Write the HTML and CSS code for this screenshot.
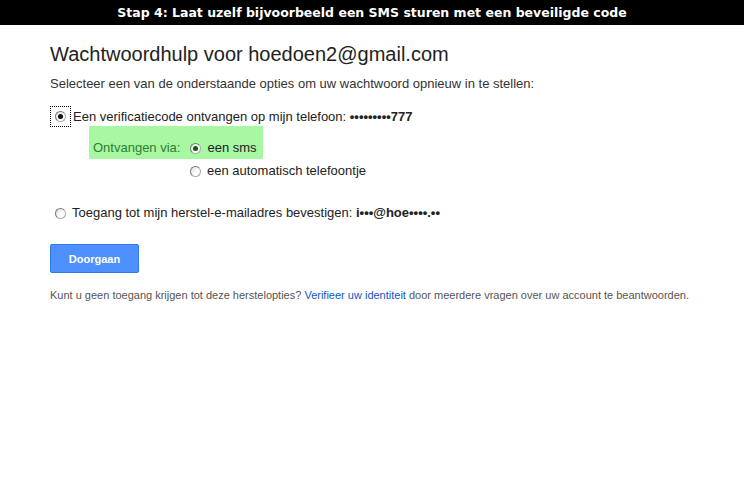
FILE: index.html
```html
<!DOCTYPE html>
<html>
<head>
<meta charset="utf-8">
<link rel="stylesheet" href="styles.css">
</head>
<body>
<div class="banner">Stap 4: Laat uzelf bijvoorbeeld een SMS sturen met een beveiligde code</div>
<div class="main">
  <h1 class="title">Wachtwoordhulp voor hoedoen2@gmail.com</h1>
  <p class="intro">Selecteer een van de onderstaande opties om uw wachtwoord opnieuw in te stellen:</p>
  <div class="option first">
    <span class="focus"><span class="radio checked"></span></span>
    <span class="label">Een verificatiecode ontvangen op mijn telefoon: <b>•••••••••777</b></span>
  </div>
  <div class="sub">
    <div class="via">
      <span class="via-label">Ontvangen via:</span>
      <span class="radio checked green"></span>
      <span class="label">een sms</span>
    </div>
    <div class="call">
      <span class="radio"></span>
      <span class="label">een automatisch telefoontje</span>
    </div>
  </div>
  <div class="option third">
    <span class="radio"></span>
    <span class="label">Toegang tot mijn herstel-e-mailadres bevestigen: <b>i•••@hoe••••.••</b></span>
  </div>
  <button class="btn">Doorgaan</button>
  <p class="foot">Kunt u geen toegang krijgen tot deze herstelopties? <a href="#">Verifieer uw identiteit</a> door meerdere vragen over uw account te beantwoorden.</p>
</div>
</body>
</html>
```
FILE: styles.css
```css
html, body { margin: 0; padding: 0; background: #fff; }
body { font-family: "Liberation Sans", Arial, sans-serif; color: #222; }
.banner {
  height: 25px; background: #000; color: #fff;
  font-family: "DejaVu Sans", Verdana, sans-serif; font-weight: bold; font-size: 12.5px;
  display: flex; align-items: center; justify-content: center;
}
.main { padding-left: 50px; }
.title { font-weight: normal; font-size: 20px; margin: 0; padding-top: 17px; line-height: 24px; color: #222; }
.intro { font-size: 13px; margin: 0; padding-top: 10px; line-height: 16px; color: #333; }
.option { display: flex; align-items: center; font-size: 13px; color: #222; }
.first { margin-top: 14px; height: 21px; }
.focus { width: 19px; height: 19px; border: 1px dotted #000; display: flex; align-items: center; justify-content: center; margin-right: 2px; }
.radio {
  width: 11px; height: 11px; border-radius: 50%; box-sizing: border-box;
  border: 1px solid #aaa; border-left-color: #777; border-top-color: #777;
  background: linear-gradient(135deg, #ddd, #fff 60%); display: inline-block; position: relative; flex: none;
}
.radio.checked::after {
  content: ""; position: absolute; left: 2px; top: 2px; width: 5px; height: 5px; border-radius: 50%; background: #111;
}
.radio.green.checked::after { background: #0a5a0a; }
.sub { margin-left: 39px; margin-top: -1px; }
.via {
  display: inline-flex; align-items: center; background: #a8f7a2; height: 33px; width: 174px; box-sizing: border-box;
  padding: 10px 0 0 4px; font-size: 13px;
}
.via-label { color: #2e7d32; margin-right: 10px; }
.via .radio { margin-right: 6px; margin-top: 2px; }
.via .label { color: #222; }
.call { display: flex; align-items: center; font-size: 13px; padding-left: 101px; margin-top: 3px; height: 16px; }
.call .radio { margin-right: 6px; margin-top: 3px; }
.third { margin-top: 26px; padding-left: 5px; height: 16px; }
.third .radio { margin-right: 6px; margin-top: 2px; }
.btn {
  margin-top: 24px; width: 89px; height: 29px; background: #4d90fe; border: 1px solid #3079ed; border-radius: 2px;
  color: #fff; font-family: "Liberation Sans", Arial, sans-serif; font-weight: bold; font-size: 11px; padding: 0;
  display: block;
}
.foot { font-size: 11px; color: #555; margin: 0; padding-top: 15px; line-height: 14px; }
.foot a { color: #15c; text-decoration: none; }
```
